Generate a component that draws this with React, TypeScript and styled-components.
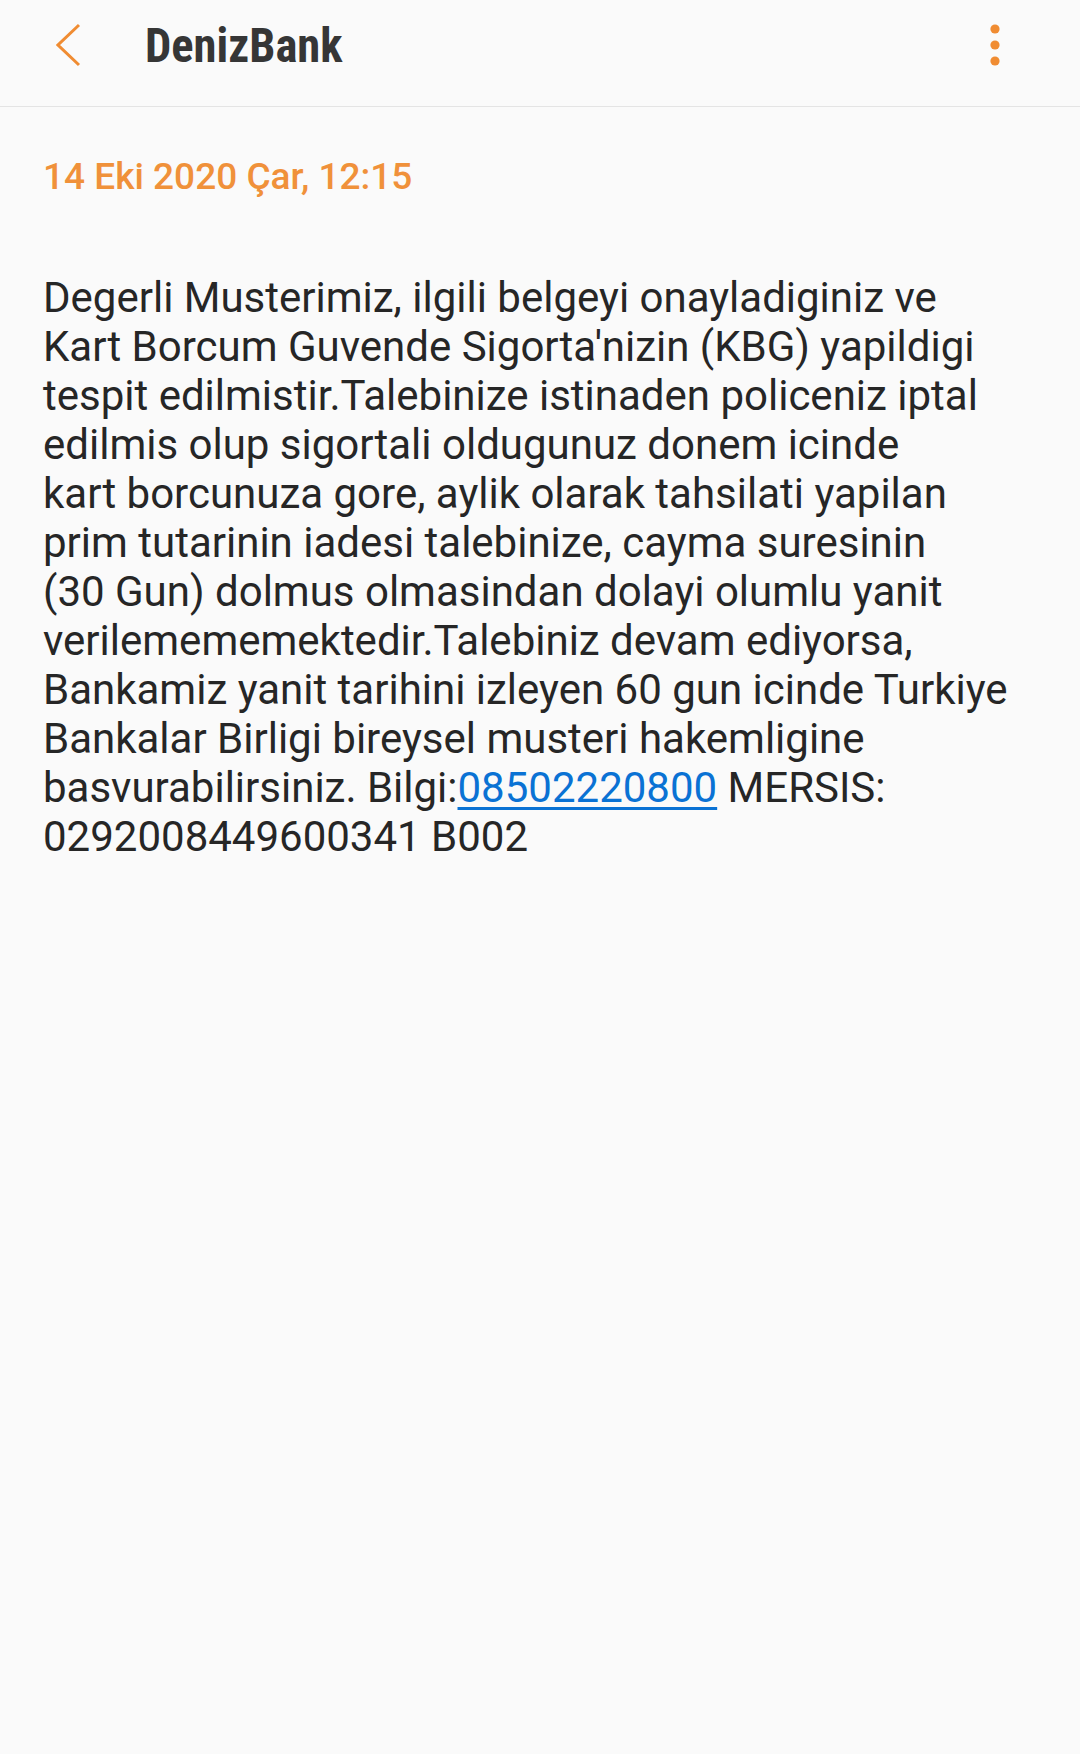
import * as React from "react";
import styled, { createGlobalStyle } from "styled-components";

const GlobalStyle = createGlobalStyle`
  html, body {
    margin: 0;
    padding: 0;
    background: #fafafa;
  }
  body {
    font-family: Roboto, "Noto Sans", sans-serif;
  }
`;

const Page = styled.div`
  width: 1080px;
  min-height: 1754px;
  background: #fafafa;
`;

const Toolbar = styled.header`
  height: 107px;
  box-sizing: border-box;
  display: flex;
  align-items: center;
  padding: 0 46px 16px 0;
  border-bottom: 1px solid #e4e4e4;
`;

const IconButton = styled.button<{ $w: number }>`
  background: none;
  border: none;
  padding: 0;
  width: ${(p) => p.$w}px;
  height: 91px;
  display: flex;
  align-items: center;
  justify-content: center;
`;

const Title = styled.h1`
  flex: 1;
  margin: 0 0 0 7px;
  font-family: Roboto, sans-serif;
  font-weight: 700;
  font-size: 49px;
  font-stretch: condensed;
  color: #363636;
  transform: scaleX(0.95);
  transform-origin: left center;
`;

const Content = styled.main`
  padding: 0 43px;
`;

const DateLine = styled.div`
  margin-top: 45px;
  font-weight: 500;
  font-size: 37px;
  line-height: 50px;
  color: #f0913a;
`;

const Body = styled.p`
  margin: 71px 0 0 0;
  font-size: 42px;
  line-height: 49px;
  color: #262626;
  white-space: nowrap;
`;

const Phone = styled.a`
  color: #0a72d4;
  text-decoration: underline;
  text-decoration-thickness: 3px;
  text-underline-offset: 5px;
`;

const lines = [
  "Degerli Musterimiz, ilgili belgeyi onayladiginiz ve",
  "Kart Borcum Guvende Sigorta'nizin (KBG) yapildigi",
  "tespit edilmistir.Talebinize istinaden policeniz iptal",
  "edilmis olup sigortali oldugunuz donem icinde",
  "kart borcunuza gore, aylik olarak tahsilati yapilan",
  "prim tutarinin iadesi talebinize, cayma suresinin",
  "(30 Gun) dolmus olmasindan dolayi olumlu yanit",
  "verilemememektedir.Talebiniz devam ediyorsa,",
  "Bankamiz yanit tarihini izleyen 60 gun icinde Turkiye",
  "Bankalar Birligi bireysel musteri hakemligine",
];

export default function App() {
  return (
    <Page>
      <GlobalStyle />
      <Toolbar>
        <IconButton $w={138}>
          <svg width="26" height="44" viewBox="0 0 26 44">
            <polyline
              points="23,2 2,22 23,42"
              fill="none"
              stroke="#f08c32"
              strokeWidth="3"
            />
          </svg>
        </IconButton>
        <Title>DenizBank</Title>
        <IconButton $w={78}>
          <svg width="12" height="44" viewBox="0 0 12 44">
            <circle cx="6" cy="6" r="4.6" fill="#f08c32" />
            <circle cx="6" cy="22" r="4.6" fill="#f08c32" />
            <circle cx="6" cy="38" r="4.6" fill="#f08c32" />
          </svg>
        </IconButton>
      </Toolbar>
      <Content>
        <DateLine>14 Eki 2020 Çar, 12:15</DateLine>
        <Body>
          {lines.map((l) => (
            <React.Fragment key={l}>
              {l}
              <br />
            </React.Fragment>
          ))}
          basvurabilirsiniz. Bilgi:<Phone href="#">08502220800</Phone> MERSIS:
          <br />
          0292008449600341 B002
        </Body>
      </Content>
    </Page>
  );
}
